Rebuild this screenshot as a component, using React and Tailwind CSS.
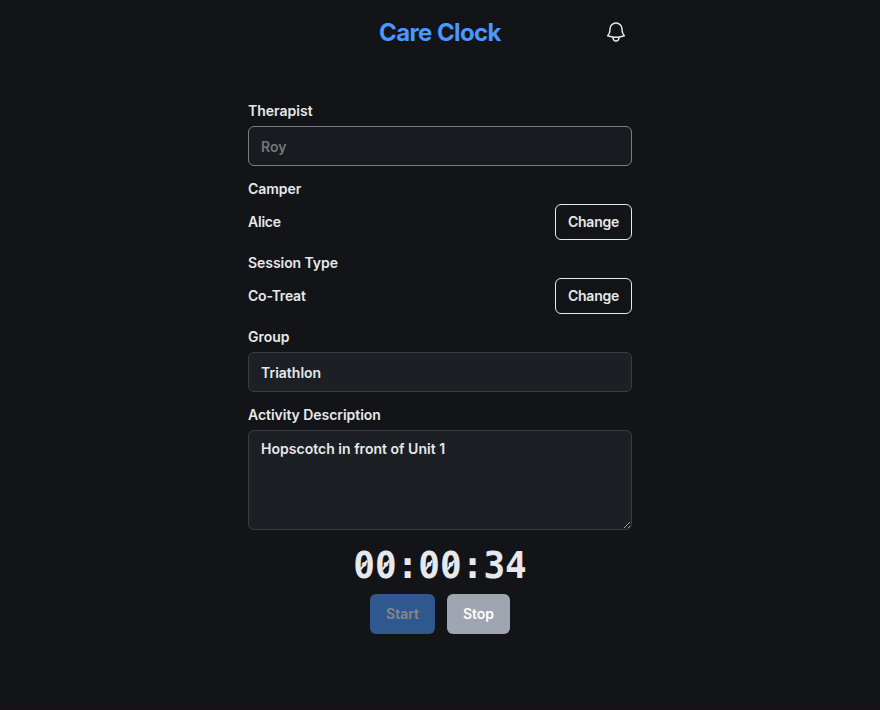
import React from 'react';

function Row({ label, value }) {
  return (
    <div className="flex flex-col gap-[5px]">
      <span className="tracking-[-0.06px]">{label}</span>
      <div className="flex h-9 items-center justify-between">
        <span className="tracking-[-0.22px]">{value}</span>
        <button className="h-9 w-[77px] rounded-md border border-[#e6e8eb] tracking-[-0.22px]">Change</button>
      </div>
    </div>
  );
}

function Digit({ char }) {
  if (char !== '0') return <span>{char}</span>;
  return (
    <span className="relative">
      0
      <svg className="absolute left-0 top-1.5" width="22" height="28" viewBox="0 0 22 28" stroke="currentColor" strokeWidth="2.2" aria-hidden="true">
        <path d="M7.6 18.2 14.2 9.8" />
      </svg>
    </span>
  );
}

export default function App() {
  return (
    <div className="flex h-[710px] flex-col items-center border-b-4 border-[#17131a] bg-[#121417] font-['Inter',sans-serif] text-sm font-semibold text-[#e6e8eb]">
      <header className="grid h-16 w-96 grid-cols-[1fr_auto_1fr] items-center">
        <h1 className="col-start-2 pt-0.5 text-2xl font-bold tracking-tight text-[#4a98ff]">Care Clock</h1>
        <button className="mr-1 justify-self-end" aria-label="Notifications">
          <svg width="24" height="24" viewBox="0 0 24 24" fill="none" stroke="currentColor" strokeWidth="1.5" strokeLinecap="round" strokeLinejoin="round">
            <path d="M14.857 17.082a24 24 0 0 0 5.454-1.31A8.97 8.97 0 0 1 18 9.75V9A6 6 0 0 0 6 9v.75a8.97 8.97 0 0 1-2.312 6.022c1.733.64 3.56 1.085 5.455 1.31m5.714 0a24 24 0 0 1-5.714 0m5.714 0a3 3 0 1 1-5.714 0" />
          </svg>
        </button>
      </header>
      <main className="mt-[37px] flex w-96 flex-col gap-[13px]">
        <label className="flex flex-col gap-[5px]">
          Therapist
          <input disabled placeholder="Roy" className="h-10 rounded-md border border-[#7b7c7e] bg-[#181b1f] px-3 placeholder:text-[#777]" />
        </label>
        <Row label="Camper" value="Alice" />
        <Row label="Session Type" value="Co-Treat" />
        <label className="flex flex-col gap-[5px]">
          Group
          <input defaultValue="Triathlon" className="h-10 rounded-md border border-[#3a3e42] bg-[#1c1f23] px-3" />
        </label>
        <label className="flex flex-col gap-[5px] tracking-[-0.04px]">
          Activity Description
          <textarea defaultValue="Hopscotch in front of Unit 1" className="h-[100px] rounded-md border border-[#3a3e42] bg-[#1c1f23] px-3 py-2 tracking-[0.02px]" />
        </label>
      </main>
      <div className="mt-[15px] flex scale-y-105 font-['DejaVu_Sans_Mono',monospace] text-4xl font-bold">
        {[...'00:00:34'].map((char, i) => <Digit key={i} char={char} />)}
      </div>
      <div className="mt-[9px] flex gap-3">
        <button disabled className="h-10 w-[65px] rounded-md bg-[#2f588f] text-[#85888c]">Start</button>
        <button className="h-10 w-[63px] rounded-md bg-[#a0a5b2] text-white">Stop</button>
      </div>
    </div>
  );
}
